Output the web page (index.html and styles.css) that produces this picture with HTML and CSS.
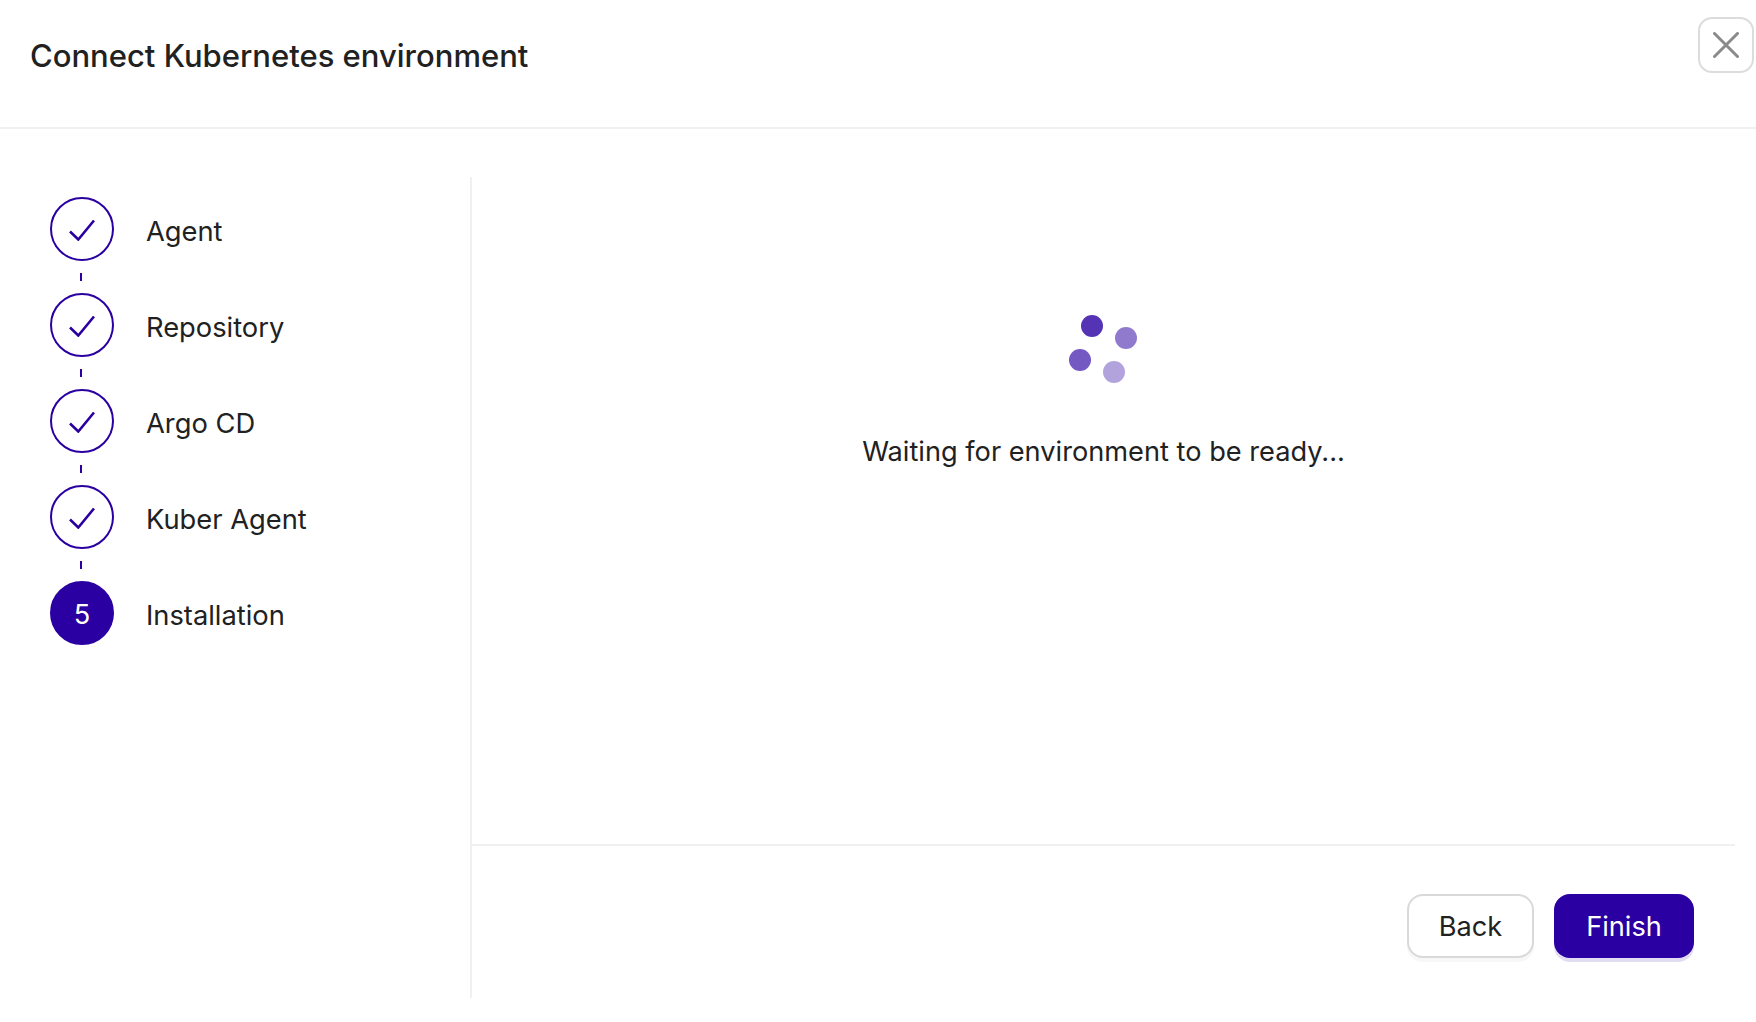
FILE: index.html
```html
<!DOCTYPE html>
<html lang="en">
<head>
<meta charset="utf-8">
<title>Connect Kubernetes environment</title>
<link rel="stylesheet" href="styles.css">
</head>
<body>
<div class="modal">
  <header class="modal-header">
    <h1 class="modal-title">Connect Kubernetes environment</h1>
    <button class="close-btn" aria-label="Close">
      <svg class="close-icon" viewBox="0 0 26 26"><path d="M1.5 1.5 24.5 24.5M24.5 1.5 1.5 24.5"/></svg>
    </button>
  </header>
  <div class="modal-body">
    <nav class="stepper">
      <div class="step">
        <span class="step-circle"><svg class="check" viewBox="0 0 26 22"><path d="M1 12.5 9.3 20.5 25 1.5"/></svg></span>
        <span class="step-label">Agent</span>
      </div>
      <div class="connector"></div>
      <div class="step">
        <span class="step-circle"><svg class="check" viewBox="0 0 26 22"><path d="M1 12.5 9.3 20.5 25 1.5"/></svg></span>
        <span class="step-label">Repository</span>
      </div>
      <div class="connector"></div>
      <div class="step">
        <span class="step-circle"><svg class="check" viewBox="0 0 26 22"><path d="M1 12.5 9.3 20.5 25 1.5"/></svg></span>
        <span class="step-label">Argo CD</span>
      </div>
      <div class="connector"></div>
      <div class="step">
        <span class="step-circle"><svg class="check" viewBox="0 0 26 22"><path d="M1 12.5 9.3 20.5 25 1.5"/></svg></span>
        <span class="step-label">Kuber Agent</span>
      </div>
      <div class="connector"></div>
      <div class="step">
        <span class="step-circle step-circle-active">5</span>
        <span class="step-label">Installation</span>
      </div>
    </nav>
    <section class="panel">
      <div class="panel-content">
        <svg class="spinner" viewBox="0 0 70 70">
          <circle class="dot dot-1" cx="23" cy="12" r="11"/>
          <circle class="dot dot-2" cx="57" cy="24" r="11"/>
          <circle class="dot dot-3" cx="11" cy="46" r="11"/>
          <circle class="dot dot-4" cx="45" cy="58" r="11"/>
        </svg>
        <p class="status-text">Waiting for environment to be ready...</p>
      </div>
      <footer class="panel-footer">
        <button class="btn btn-secondary">Back</button>
        <button class="btn btn-primary">Finish</button>
      </footer>
    </section>
  </div>
</div>
</body>
</html>
```
FILE: styles.css
```css
* { box-sizing: border-box; }
html, body { margin: 0; height: 100%; background: #fff; }
body { font-family: Inter, "Liberation Sans", sans-serif; color: #212121; overflow: hidden; }

.modal { display: flex; flex-direction: column; height: 1022px; position: relative; }

.modal-header { height: 129px; border-bottom: 2px solid #f0f0f0; padding: 0 30px; display: flex; align-items: center; }
.modal-title { margin: 0 0 16px; font-size: 31px; font-weight: 450; line-height: 40px; }

.close-btn { position: absolute; top: 17px; right: 2px; width: 56px; height: 56px; padding: 0; display: flex; align-items: center; justify-content: center; background: #fff; border: 2px solid #dcdcdc; border-radius: 14px; }
.close-icon { width: 26px; height: 26px; fill: none; stroke: #8a8a8a; stroke-width: 3; stroke-linecap: round; }

.modal-body { display: flex; padding-top: 48px; height: 868px; }

.stepper { width: 472px; height: 821px; flex: none; border-right: 2px solid #f0f0f0; padding: 20px 0 0 50px; }
.step { display: flex; align-items: center; gap: 32px; height: 64px; }
.step-circle { width: 64px; height: 64px; flex: none; border-radius: 50%; border: 2px solid #2a00a2; display: flex; align-items: center; justify-content: center; font-size: 27.2px; padding-top: 2px; }
.step-circle-active { background: #2a00a2; color: #fff; }
.check { width: 26px; height: 22px; fill: none; stroke: #2a00a2; stroke-width: 2.6; }
.step-label { font-size: 27.3px; line-height: 36px; padding-top: 6px; color: #212121; }
.connector { width: 2px; height: 8px; background: #2a00a2; margin: 12px 0 12px 30px; }

.panel { flex: 1; display: flex; flex-direction: column; margin-right: 21px; }
.panel-content { height: 667px; display: flex; flex-direction: column; align-items: center; padding-top: 137px; }
.spinner { width: 70px; height: 70px; display: block; }
.dot { fill: #2a00a2; }
.dot-1 { opacity: .8; }
.dot-2 { opacity: .52; }
.dot-3 { opacity: .65; }
.dot-4 { opacity: .36; }
.status-text { margin: 50px 0 0; font-size: 27.2px; line-height: 36px; color: #212121; }

.panel-footer { border-top: 2px solid #f0f0f0; display: flex; justify-content: flex-end; gap: 20px; padding: 48px 41px 0 0; }
.btn { height: 64px; padding: 0; border-radius: 16px; font: 400 27.2px Inter, "Liberation Sans", sans-serif; }
.btn-secondary { width: 127px; background: #fff; color: #212121; border: 2px solid #d9d9d9; box-shadow: 0 4px 0 #f7f7f7; }
.btn-primary { width: 140px; background: #2a00a2; color: #fff; border: 0; box-shadow: 0 4px 0 #e2dcf3; }
```
